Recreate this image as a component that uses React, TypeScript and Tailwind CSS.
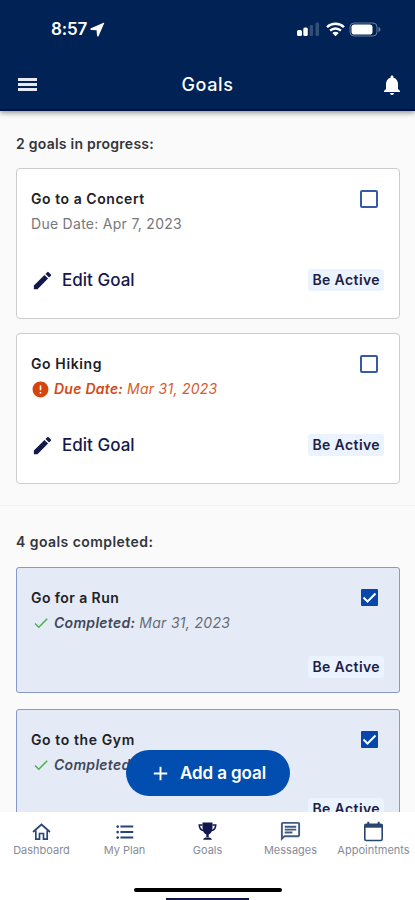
import {
  MdAdd,
  MdCheck,
  MdEdit,
  MdError,
  MdFormatListBulleted,
  MdNotifications,
  MdOutlineChat,
} from 'react-icons/md';

type Goal = {
  title: string;
  date: string;
  overdue?: boolean;
  titleClass: string;
};

const activeGoals: Goal[] = [
  { title: 'Go to a Concert', date: 'Apr 7, 2023', titleClass: 'tracking-[0.55px]' },
  { title: 'Go Hiking', date: 'Mar 31, 2023', overdue: true, titleClass: 'tracking-[0.6px]' },
];

const completedGoals: Goal[] = [
  { title: 'Go for a Run', date: 'Mar 31, 2023', titleClass: 'tracking-[0.42px]' },
  { title: 'Go to the Gym', date: 'Mar 31, 2023', titleClass: 'tracking-[0.6px]' },
];

function StatusBar() {
  return (
    <div className="flex h-[58px] items-center justify-between pl-[51px] pr-[34px]">
      <div className="flex items-center gap-[3px] text-[17px] font-semibold leading-none tracking-[-0.2px]">
        8:57
        <svg width="15" height="15" viewBox="0 0 15 15" fill="currentColor">
          <path d="M13.600.7.9 6.300c-.9.400-.7 1.500.2 1.600l5.500.4.4 5.500c.1.900 1.200 1.100 1.600.2L14.200 1.300c.2-.4-.2-.8-.6-.6Z" />
        </svg>
      </div>
      <div className="flex items-center">
        <svg width="23" height="14" viewBox="0 0 23 14" fill="white">
          <rect x="0" y="8" width="5" height="6" rx="1.500" />
          <rect x="6.300" y="5.500" width="4.500" height="8.500" rx="1.500" />
          <rect x="12.600" y="3" width="3.500" height="11" rx="1.200" opacity="0.200" />
          <rect x="18.500" y="0.500" width="3.500" height="13.500" rx="1.200" opacity="0.200" />
        </svg>
        <svg className="ml-[6px]" width="19" height="15" viewBox="0 0 19 15" fill="none" stroke="white" strokeWidth="2.400">
          <path d="M1 5.200a12.300 12.300 0 0 1 17 0" />
          <path d="M4.100 8.600a7.800 7.800 0 0 1 10.800 0" />
          <path d="m9.500 14.300-3.200-3.300a4.600 4.600 0 0 1 6.400 0Z" fill="white" stroke="none" />
        </svg>
        <svg className="ml-1" width="32" height="15" viewBox="0 0 32 15">
          <rect x="1" y="1" width="27" height="13" rx="4" fill="none" stroke="white" strokeOpacity="0.4" />
          <rect x="2.500" y="2.500" width="21" height="10" rx="2.800" fill="white" />
          <path d="M29.500 5v5c1.300-.4 2-1.400 2-2.500s-.7-2.100-2-2.500Z" fill="white" fillOpacity="0.4" />
        </svg>
      </div>
    </div>
  );
}

function HomeIcon() {
  return (
    <svg width="21" height="21" viewBox="0 0 21 21" fill="none" stroke="#294572" strokeWidth="1.700">
      <path d="m2 11 8.500-7.500L19 11" />
      <path d="M4.800 9.500v8.700h3.700v-5.700h4v5.700h3.700V9.500" />
    </svg>
  );
}

function TrophyIcon() {
  return (
    <svg width="21" height="21" viewBox="0 0 21 21" fill="#10184f">
      <path d="M5.500 1.500h10v4.700c0 3.700-1.500 6.300-3.800 7.200v2.800h-2.400v-2.800C7 12.500 5.500 9.900 5.500 6.200Z" />
      <path d="M5.500 4H2.300c0 3 1.700 5.200 4.700 5.800M15.500 4h3.200c0 3-1.700 5.200-4.700 5.800" fill="none" stroke="#10184f" strokeWidth="1.600" />
      <path d="M6.200 18.800c0-1.700 1.500-2.300 4.300-2.300s4.300.6 4.300 2.300Z" />
    </svg>
  );
}

function CalendarIcon() {
  return (
    <svg width="21" height="21" viewBox="0 0 21 21" fill="none" stroke="#294572">
      <rect x="1.800" y="3.300" width="17.400" height="16.200" rx="1.500" strokeWidth="1.600" />
      <path d="M1.500 4.900h18" strokeWidth="3.600" />
      <path d="M5.300.8v3M15.700.8v3" strokeWidth="2" />
    </svg>
  );
}

function GoalCard({ goal, completed = false }: { goal: Goal; completed?: boolean }) {
  return (
    <div
      className={
        completed
          ? 'flex h-[126px] flex-col justify-between rounded-[3px] border border-[#8799c8] bg-[#e5ebf6] px-[15px] pt-[20px] pb-[14px]'
          : 'flex h-[151px] flex-col justify-between rounded-[4px] border border-[#cccccf] bg-white px-[15px] pt-[20px] pb-[26px]'
      }
    >
      <div className="flex justify-between">
        <div className="-ml-px">
          <h3 className={`text-[14px] font-semibold leading-5 text-[#202127] ${goal.titleClass}`}>{goal.title}</h3>
          {completed ? (
            <p className="mt-[5px] flex items-center text-[14px] italic leading-5 tracking-[0.3px] text-[#666b79]">
              <MdCheck className="mr-[4px] ml-px size-[18px] text-[#4caf50]" />
              <span className="mr-1 font-semibold text-[#40475a]">Completed:</span>
              {goal.date}
            </p>
          ) : goal.overdue ? (
            <p className="mt-[5px] flex items-center text-[14px] italic leading-5 tracking-[0.26px] text-[#d85b2e]">
              <MdError className="mr-[4px] size-[19px] text-[#d6440c]" />
              <span className="mr-1 font-semibold text-[#d34a18]">Due Date:</span>
              {goal.date}
            </p>
          ) : (
            <p className="mt-[5px] text-[14px] leading-5 tracking-[0.28px] text-[#77777b]">Due Date: {goal.date}</p>
          )}
        </div>
        {completed ? (
          <span className="mr-[6px] mt-[1px] flex size-[17px] items-center justify-center rounded-[1px] bg-[#0747ac] text-white">
            <svg width="15" height="13" viewBox="0 0 15 13" fill="none" stroke="currentColor" strokeWidth="2">
              <path d="m1.500 6.500 4 4 8-8" />
            </svg>
          </span>
        ) : (
          <span className="mr-[6px] mt-[1px] size-[18px] rounded-[2px] border-2 border-[#3659a9]" />
        )}
      </div>
      <div className="flex items-center justify-between">
        {completed ? (
          <span />
        ) : (
          <button className="-ml-px flex items-center text-[17px] font-medium leading-6 tracking-[0.02px] text-[#13194b]">
            <MdEdit className="mr-[8px] size-[23px]" />
            Edit Goal
          </button>
        )}
        <span className="rounded-[3px] bg-[#eaf3ff] px-1 text-[14px] font-semibold leading-[22px] tracking-[0.4px] text-[#1b2145]">
          Be Active
        </span>
      </div>
    </div>
  );
}

function BottomNav() {
  return (
    <nav className="relative h-[88px] shrink-0 bg-white text-[11px] text-[#888c99]">
      <div className="grid grid-cols-5 pt-[9px]">
        <div className="flex flex-col items-center">
          <HomeIcon />
          <span className="leading-[17px]">Dashboard</span>
        </div>
        <div className="flex flex-col items-center">
          <MdFormatListBulleted className="size-[22px] -mb-px text-[#294572]" />
          <span className="leading-[17px]">My Plan</span>
        </div>
        <div className="flex flex-col items-center">
          <TrophyIcon />
          <span className="leading-[17px]">Goals</span>
        </div>
        <div className="flex flex-col items-center">
          <MdOutlineChat className="size-[23px] -my-px text-[#405a80]" />
          <span className="leading-[17px]">Messages</span>
        </div>
        <div className="flex flex-col items-center">
          <CalendarIcon />
          <span className="leading-[17px]">Appointments</span>
        </div>
      </div>
      <div className="mx-auto mt-[29px] h-1 w-[148px] rounded-full bg-black" />
      <div className="mx-auto mt-[6px] h-[2px] w-[83px] bg-[#10184f]" />
    </nav>
  );
}

export default function App() {
  return (
    <div className="relative flex h-[900px] w-[415px] flex-col overflow-hidden bg-[#fafafa] font-['Inter',sans-serif]">
      <header className="z-10 h-[111px] shrink-0 border-b-2 border-[#001349] bg-[#002255] text-white shadow-[0_2px_5px_rgba(0,0,0,0.4)]">
        <StatusBar />
        <div className="grid h-[53px] grid-cols-3 items-center px-4">
          <div className="ml-[2px] flex w-[19px] flex-col gap-[2px]">
            <span className="h-[3px] bg-[#e6e9ef]" />
            <span className="h-[3px] bg-[#e6e9ef]" />
            <span className="h-[3px] bg-[#e6e9ef]" />
          </div>
          <h1 className="text-center text-[18px] font-medium tracking-[0.6px]">Goals</h1>
          <MdNotifications className="-mr-[5px] size-6 justify-self-end" />
        </div>
      </header>

      <main className="min-h-0 flex-1 overflow-hidden">
        <section className="h-[395px] border-b border-[#f2f2f2] pl-4 pr-[15px] pt-[23px]">
          <h2 className="text-[14px] font-semibold leading-5 tracking-[0.25px] text-[#34353a]">2 goals in progress:</h2>
          <div className="mt-[14px] flex flex-col gap-[14px]">
            {activeGoals.map((goal) => (
              <GoalCard key={goal.title} goal={goal} />
            ))}
          </div>
        </section>
        <section className="pl-4 pr-[15px] pt-[26px]">
          <h2 className="text-[14px] font-semibold leading-5 tracking-[0.44px] text-[#34353a]">4 goals completed:</h2>
          <div className="mt-[15px] flex flex-col gap-4">
            {completedGoals.map((goal) => (
              <GoalCard key={goal.title} goal={goal} completed />
            ))}
          </div>
        </section>
      </main>

      <button className="absolute left-[126px] top-[750px] flex h-[46px] w-[164px] items-center rounded-full bg-[#024db0] pl-[23px] pt-px text-[17px] font-semibold tracking-[-0.1px] text-white">
        <MdAdd className="mr-[8px] size-[23px]" />
        Add a goal
      </button>

      <BottomNav />
    </div>
  );
}
